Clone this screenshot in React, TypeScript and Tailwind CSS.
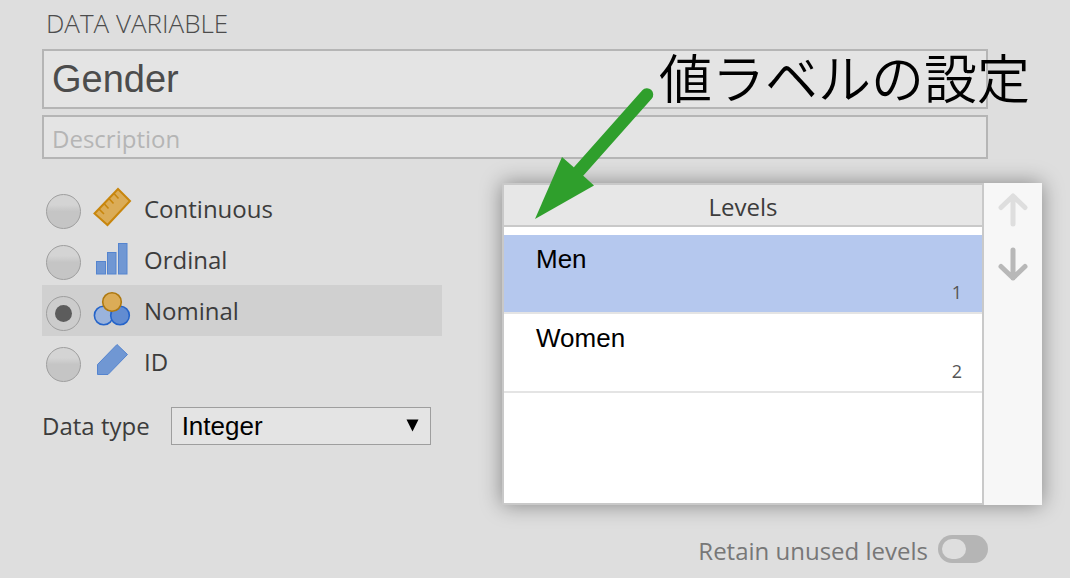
import { useState } from "react";
import type { ReactNode } from "react";

const uiFont = "font-['Open_Sans','Noto_Sans',sans-serif]";
const arialFont = "font-['Liberation_Sans',Arial,sans-serif]";

function RulerIcon() {
  return (
    <svg width="40" height="44" viewBox="0 0 40 44" aria-hidden="true">
      <path d="M2.500 26.500 L26 2 L38 14 L15.500 38 Z" fill="#dbac57" stroke="#c8860d" strokeWidth="2" />
      <path d="M7 22 l5 5 M12 16.500 l4.500 5 M17 11.500 l4.500 5 M22 6.500 l4.500 5" stroke="#c8860d" strokeWidth="1.600" fill="none" />
    </svg>
  );
}

function BarsIcon() {
  return (
    <svg width="40" height="44" viewBox="0 0 40 44" aria-hidden="true">
      <g fill="#7097d3" stroke="#5484cf" strokeWidth="1">
        <rect x="4.500" y="23.500" width="9" height="12.500" />
        <rect x="15.500" y="14.500" width="8.500" height="21.500" />
        <rect x="26.500" y="5.500" width="8.500" height="30.500" />
      </g>
    </svg>
  );
}

function CirclesIcon() {
  return (
    <svg width="40" height="44" viewBox="0 0 40 44" aria-hidden="true">
      <circle cx="11.700" cy="26.500" r="9.300" fill="#9ab3dc" stroke="#2564c9" strokeWidth="1.600" />
      <circle cx="28" cy="26.500" r="9.300" fill="#628cd1" stroke="#2564c9" strokeWidth="1.600" />
      <circle cx="20" cy="13" r="9.300" fill="#dbac57" stroke="#ae780f" strokeWidth="1.600" />
    </svg>
  );
}

function TagIcon() {
  return (
    <svg width="40" height="44" viewBox="0 0 40 44" aria-hidden="true">
      <path d="M5.500 24.500 L25 4.500 L35.500 14.500 L16 34.500 H5.500 Z" fill="#7097d3" stroke="#5484cf" strokeWidth="1" />
    </svg>
  );
}

const measures: { id: string; label: string; icon: ReactNode }[] = [
  { id: "continuous", label: "Continuous", icon: <RulerIcon /> },
  { id: "ordinal", label: "Ordinal", icon: <BarsIcon /> },
  { id: "nominal", label: "Nominal", icon: <CirclesIcon /> },
  { id: "id", label: "ID", icon: <TagIcon /> },
];

const levels = [
  { label: "Men", value: 1 },
  { label: "Women", value: 2 },
];

function Annotation() {
  return (
    <div className="pointer-events-none absolute top-10 right-10 flex">
      <svg width="124" height="180" viewBox="535 40 124 180" aria-hidden="true">
        <path d="M579 171 L647 94.500" stroke="#2f9f2c" strokeWidth="12.500" strokeLinecap="round" />
        <path d="M535 219 L562 157 L574 167.500 L583 175.500 L594 185.500 Z" fill="#2f9f2c" />
      </svg>
      <p className="font-['Noto_Sans_CJK_JP',sans-serif] text-[53px] leading-[72px] font-[350] whitespace-nowrap text-black">
        値ラベルの設定
      </p>
    </div>
  );
}

export default function App() {
  const [measure, setMeasure] = useState("nominal");
  const [selected, setSelected] = useState(0);
  const [retain, setRetain] = useState(false);

  return (
    <main className={`relative min-h-screen bg-[#dedede] pt-2 pr-7 pb-2 pl-[42px] text-2xl text-[#3c3c3c] ${uiFont}`}>
      <h1 className="pl-1 text-[26px] leading-[30px] font-light text-[#4c4c4c]">DATA VARIABLE</h1>

      <div className="mt-[11px] mr-[54px] flex flex-col gap-1.5">
        <input
          aria-label="Name"
          defaultValue="Gender"
          className={`h-[60px] w-full border-2 border-[#b5b5b5] bg-[#e4e4e4] px-2 text-[38px] text-[#4c4c4c] outline-none ${arialFont}`}
        />
        <input
          aria-label="Description"
          placeholder="Description"
          className="h-11 w-full border-2 border-[#b5b5b5] bg-[#e4e4e4] px-2 pt-0.5 text-2xl outline-none placeholder:text-[#b5b5b5]"
        />
      </div>

      <div className="mt-6 grid grid-cols-[400px_1fr] gap-[60px]">
        <div>
          <div role="radiogroup" aria-label="Measure type">
            {measures.map((m) => (
              <label
                key={m.id}
                className={`flex h-[51px] items-center pl-1 ${measure === m.id ? "bg-[#d0d0d0]" : ""}`}
              >
                <input
                  type="radio"
                  name="measure"
                  checked={measure === m.id}
                  onChange={() => setMeasure(m.id)}
                  className="mt-1.5 grid size-[35px] shrink-0 appearance-none place-items-center rounded-full border border-[#9e9e9e] bg-linear-to-b from-[#d4d4d4] from-30% to-[#c5c5c5] to-50% checked:from-[#cccccc] checked:to-[#cccccc] checked:before:size-[17px] checked:before:rounded-full checked:before:bg-[#5c5c5c] checked:before:content-['']"
                />
                <span className="ml-[11px] shrink-0">{m.icon}</span>
                <span className="ml-3">{m.label}</span>
              </label>
            ))}
          </div>

          <div className="mt-5 flex items-center gap-[21px]">
            <label htmlFor="data-type" className="whitespace-nowrap">
              Data type
            </label>
            <div className="relative">
              <select
                id="data-type"
                className={`h-[38px] w-[260px] appearance-none border border-[#9e9e9e] bg-[#e4e4e4] pl-2.5 text-[26px] leading-8 text-black ${arialFont}`}
              >
                <option>Integer</option>
                <option>Decimal</option>
                <option>Text</option>
              </select>
              <svg className="pointer-events-none absolute top-3 right-3" width="13" height="13" viewBox="0 0 13 13" aria-hidden="true">
                <path d="M0.500 0.500 H12.500 L6.500 12.500 Z" fill="#000" />
              </svg>
            </div>
          </div>
        </div>

        <div>
          <section className="flex h-[322px] bg-[#f7f7f7] shadow-[0_0_20px_rgba(0,0,0,0.4)]">
            <div className="flex-1 border-2 border-[#c9c9c9] bg-white">
              <h2 className="h-[42px] border-b-2 border-[#c9c9c9] bg-[#e7e7e7] text-center leading-[44px]">Levels</h2>
              <ul className="pt-2">
                {levels.map((level, i) => (
                  <li key={level.value} className="border-b-2 border-[#e4e4e4]">
                    <button
                      type="button"
                      aria-pressed={selected === i}
                      onClick={() => setSelected(i)}
                      className={`flex h-[77px] w-full flex-col justify-between pt-2 pr-5 pb-2 pl-8 text-left ${selected === i ? "bg-[#b5c8ee]" : "bg-white"}`}
                    >
                      <span className={`text-[26px] leading-8 text-black ${arialFont}`}>{level.label}</span>
                      <span className="self-end text-lg leading-6 text-[#555555]">{level.value}</span>
                    </button>
                  </li>
                ))}
              </ul>
            </div>
            <div className="flex w-[58px] flex-col items-center gap-5 pt-2.5">
              <button type="button" aria-label="Move up" className="text-[#dedede]">
                <svg className="block" width="30" height="34" viewBox="0 0 30 34" fill="none" stroke="currentColor" strokeWidth="5" strokeLinecap="round" strokeLinejoin="round" aria-hidden="true">
                  <path d="M15 31 V3 M3 14.500 L15 3 L27 14.500" />
                </svg>
              </button>
              <button type="button" aria-label="Move down" className="text-[#b8b8b8]">
                <svg className="block" width="30" height="34" viewBox="0 0 30 34" fill="none" stroke="currentColor" strokeWidth="5" strokeLinecap="round" strokeLinejoin="round" aria-hidden="true">
                  <path d="M15 3 V31 M3 19.500 L15 31 L27 19.500" />
                </svg>
              </button>
            </div>
          </section>

          <label className="mt-7 mr-[54px] flex items-start justify-end gap-2.5 text-[#777777]">
            <span className="leading-9">Retain unused levels</span>
            <input
              type="checkbox"
              role="switch"
              checked={retain}
              onChange={(e) => setRetain(e.target.checked)}
              className="mt-0.5 flex h-7 w-[50px] appearance-none items-center rounded-full bg-[#b5b5b5] px-1 before:h-5 before:w-6 before:rounded-full before:bg-[#dedede] before:content-[''] checked:justify-end"
            />
          </label>
        </div>
      </div>

      <Annotation />
    </main>
  );
}
